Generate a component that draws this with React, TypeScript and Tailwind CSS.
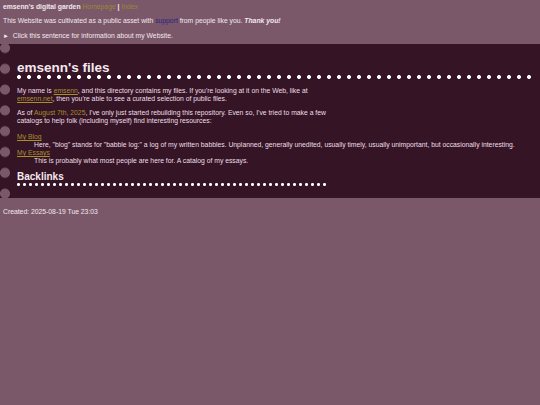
import React from 'react';

export default function App() {
  return (
    <div className="min-h-screen bg-[#7a5869] font-['Liberation_Sans',Arial,sans-serif] text-[6.8px] leading-[8px] text-[#f4e8ee]">
      {/* Site header */}
      <header className="px-[3px] pt-[3px]">
        <div className="font-bold">
          emsenn's digital garden{' '}
          <a className="font-normal text-[#9c8636]">Homepage</a> |{' '}
          <a className="font-normal text-[#9c8636]">Index</a>
        </div>
        <p className="mt-[6px]">
          This Website was cultivated as a public asset with{' '}
          <a className="text-[#2c1e84]">support</a> from people like you.{' '}
          <strong className="italic">Thank you!</strong>
        </p>
        <details className="mt-[7px]">
          <summary className="cursor-pointer list-none">
            <span className="mr-[2px] text-[6px]">&#9658;</span> Click this sentence for information about my Website.
          </summary>
        </details>
      </header>

      {/* Notebook panel */}
      <main className="mt-[4px] bg-[#341425] bg-[radial-gradient(circle_at_5px_50%,#7a5869_4.6px,transparent_5.4px)] bg-[length:12px_20.8px] bg-repeat-y bg-[position:0_-6.4px] pl-[17px] pr-[8px] pt-[16px] pb-[12px] text-[#eedfe6]">
        <h1 className="text-[13.5px] leading-[15px] font-bold text-[#f4e8ee]">emsenn's files</h1>
        <div className="h-[4px] bg-[radial-gradient(circle_at_2px_2px,#ffffff_1.6px,transparent_2.3px)] bg-[length:10px_4px] bg-repeat-x" />

        <p className="mt-[8px] max-w-[310px]">
          My name is <a className="text-[#a88e2c] underline">emsenn</a>, and this directory contains my files. If you're looking at it on the Web, like at{' '}
          <a className="text-[#a88e2c] underline">emsenn.net</a>, then you're able to see a curated selection of public files.
        </p>

        <p className="mt-[6px] max-w-[312px]">
          As of <span className="text-[#a88e2c]">August 7th, 2025</span>, I've only just started rebuilding this repository. Even so, I've tried to make a few catalogs to help folk (including myself) find interesting resources:
        </p>

        <dl className="mt-[8px]">
          <dt>
            <a className="text-[#a88e2c] underline">My Blog</a>
          </dt>
          <dd className="pl-[17px]">
            Here, "blog" stands for "babble log:" a log of my written babbles. Unplanned, generally unedited, usually timely, usually unimportant, but occasionally interesting.
          </dd>
          <dt>
            <a className="text-[#a88e2c] underline">My Essays</a>
          </dt>
          <dd className="pl-[17px]">This is probably what most people are here for. A catalog of my essays.</dd>
        </dl>

        <h2 className="mt-[6px] w-[310px] text-[10px] leading-[12px] font-bold text-[#f4e8ee]">Backlinks</h2>
        <div className="h-[3px] w-[310px] bg-[radial-gradient(circle_at_1.5px_1.5px,#ffffff_1.2px,transparent_1.8px)] bg-[length:6px_3px] bg-repeat-x" />
      </main>

      <footer className="mt-[10px] px-[3px]">Created: 2025-08-19 Tue 23:03</footer>
    </div>
  );
}
